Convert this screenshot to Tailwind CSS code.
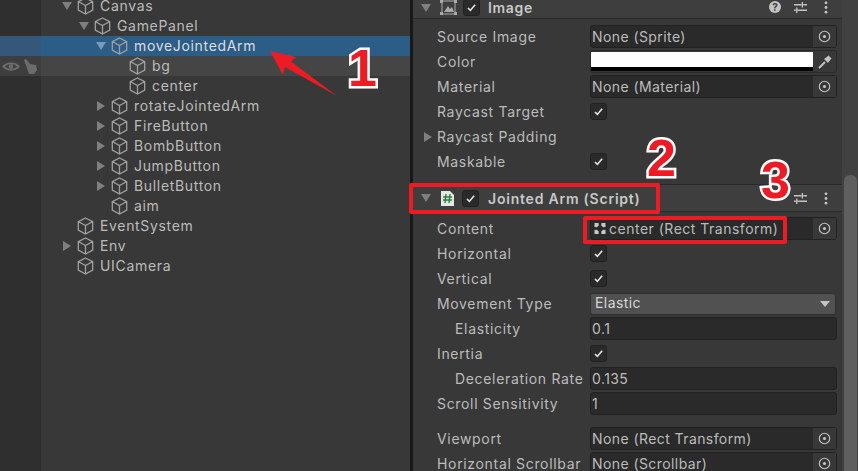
<!DOCTYPE html>
<html lang="en">
<head>
<meta charset="UTF-8">
<title>Jointed Arm</title>
<script src="https://cdn.jsdelivr.net/npm/@tailwindcss/browser@4"></script>
</head>
<body class="bg-[#383838]">
<svg class="hidden">
  <symbol id="cube" viewBox="0 0 17 18"><path d="M8.5 1 15.7 4.6V13L8.5 17 1.3 13V4.6ZM1.6 4.8 8.5 8.6 15.4 4.8M8.5 8.6V16.6" fill="none" stroke="#a0a0a0" stroke-width="1.3"/></symbol>
  <symbol id="tick" viewBox="0 0 17 17"><path d="M4.5 9 7.2 11.8 12.6 5.4" fill="none" stroke="#e6e6e6" stroke-width="1.8"/></symbol>
  <symbol id="target" viewBox="0 0 14 14"><circle cx="7" cy="7" r="5.6" fill="none" stroke="#c4c4c4" stroke-width="1.2"/><circle cx="7" cy="7" r="1.7" fill="#c4c4c4"/></symbol>
  <symbol id="sliders" viewBox="0 0 14 14"><path d="M0 4H8M10 4H14M0 10H2M4 10H14M9 1V7M3 7V13" fill="none" stroke="#c4c4c4" stroke-width="1.5"/></symbol>
  <symbol id="dots" viewBox="0 0 4 14"><circle cx="2" cy="2" r="1.5" fill="#c4c4c4"/><circle cx="2" cy="7" r="1.5" fill="#c4c4c4"/><circle cx="2" cy="12" r="1.5" fill="#c4c4c4"/></symbol>
</svg>

<div class="relative flex h-[471px] w-[858px] overflow-hidden font-['Inter','Liberation_Sans',sans-serif] text-[14px] tracking-[0.67px] text-[#bcbcbc]">

  <!-- hierarchy -->
  <div class="flex w-[410px] shrink-0 flex-col">
    <div class="mt-[-4px] flex flex-col">
      <div class="flex h-[20px] items-center"><div class="h-full w-[41px] bg-[#2f2f2f]"></div><div class="flex w-[26px] justify-end"><span class="h-0 w-0 translate-x-[5px] border-x-[5px] border-t-[8px] border-x-transparent border-t-[#7f7f7f]"></span></div><svg class="ml-[10px] h-[18px] w-[17px]"><use href="#cube"/></svg><span class="mb-[2px] ml-[6px]">Canvas</span></div>
      <div class="flex h-[20px] items-center"><div class="h-full w-[41px] bg-[#2f2f2f]"></div><div class="flex w-[43px] justify-end"><span class="h-0 w-0 translate-x-[5px] border-x-[5px] border-t-[8px] border-x-transparent border-t-[#7f7f7f]"></span></div><svg class="ml-[10px] h-[18px] w-[17px]"><use href="#cube"/></svg><span class="mb-[2px] ml-[6px]">GamePanel</span></div>
      <div class="flex h-[20px] items-center bg-[#2c5d87] text-[#dedede]"><div class="h-full w-[41px] bg-[#35587a]"></div><div class="flex w-[60px] justify-end"><span class="h-0 w-0 translate-x-[5px] border-x-[5px] border-t-[8px] border-x-transparent border-t-[#7b9ab5]"></span></div><svg class="ml-[10px] h-[18px] w-[17px]"><use href="#cube"/></svg><span class="mb-[2px] ml-[6px]">moveJointedArm</span></div>
      <div class="flex h-[20px] items-center bg-[#454545]"><div class="flex h-full w-[41px] items-center gap-[3px] bg-[#3e3e3e] pl-[2px]">
        <svg class="h-[11px] w-[18px]" viewBox="0 0 18 11"><path d="M0 5.500C4 0 14 0 18 5.500 14 11 4 11 0 5.500Z" fill="#6c6c6c"/><path d="M3 5.500C6 2.500 12 2.500 15 5.500 12 8.500 6 8.500 3 5.500Z" fill="#3e3e3e"/><circle cx="9" cy="5.500" r="2.200" fill="#6c6c6c"/></svg>
        <svg class="h-[15px] w-[15px]" viewBox="0 0 15 15"><path d="M1 1 3 0 7 5 13 6 14 11 11 15 6 15 4 9Z" fill="#6c6c6c"/></svg>
      </div><svg class="ml-[88px] h-[18px] w-[17px]"><use href="#cube"/></svg><span class="mb-[2px] ml-[6px]">bg</span></div>
      <div class="flex h-[20px] items-center"><div class="h-full w-[41px] bg-[#2f2f2f]"></div><svg class="ml-[88px] h-[18px] w-[17px]"><use href="#cube"/></svg><span class="mb-[2px] ml-[6px]">center</span></div>
      <div class="flex h-[20px] items-center"><div class="h-full w-[41px] bg-[#2f2f2f]"></div><div class="flex w-[60px] justify-end"><span class="h-0 w-0 translate-x-[4px] border-y-[5px] border-l-[8px] border-y-transparent border-l-[#7f7f7f]"></span></div><svg class="ml-[10px] h-[18px] w-[17px]"><use href="#cube"/></svg><span class="mb-[2px] ml-[6px]">rotateJointedArm</span></div>
      <div class="flex h-[20px] items-center"><div class="h-full w-[41px] bg-[#2f2f2f]"></div><div class="flex w-[60px] justify-end"><span class="h-0 w-0 translate-x-[4px] border-y-[5px] border-l-[8px] border-y-transparent border-l-[#7f7f7f]"></span></div><svg class="ml-[10px] h-[18px] w-[17px]"><use href="#cube"/></svg><span class="mb-[2px] ml-[6px]">FireButton</span></div>
      <div class="flex h-[20px] items-center"><div class="h-full w-[41px] bg-[#2f2f2f]"></div><div class="flex w-[60px] justify-end"><span class="h-0 w-0 translate-x-[4px] border-y-[5px] border-l-[8px] border-y-transparent border-l-[#7f7f7f]"></span></div><svg class="ml-[10px] h-[18px] w-[17px]"><use href="#cube"/></svg><span class="mb-[2px] ml-[6px]">BombButton</span></div>
      <div class="flex h-[20px] items-center"><div class="h-full w-[41px] bg-[#2f2f2f]"></div><div class="flex w-[60px] justify-end"><span class="h-0 w-0 translate-x-[4px] border-y-[5px] border-l-[8px] border-y-transparent border-l-[#7f7f7f]"></span></div><svg class="ml-[10px] h-[18px] w-[17px]"><use href="#cube"/></svg><span class="mb-[2px] ml-[6px]">JumpButton</span></div>
      <div class="flex h-[20px] items-center"><div class="h-full w-[41px] bg-[#2f2f2f]"></div><div class="flex w-[60px] justify-end"><span class="h-0 w-0 translate-x-[4px] border-y-[5px] border-l-[8px] border-y-transparent border-l-[#7f7f7f]"></span></div><svg class="ml-[10px] h-[18px] w-[17px]"><use href="#cube"/></svg><span class="mb-[2px] ml-[6px]">BulletButton</span></div>
      <div class="flex h-[20px] items-center"><div class="h-full w-[41px] bg-[#2f2f2f]"></div><svg class="ml-[70px] h-[18px] w-[17px]"><use href="#cube"/></svg><span class="mb-[2px] ml-[6px]">aim</span></div>
      <div class="flex h-[20px] items-center"><div class="h-full w-[41px] bg-[#2f2f2f]"></div><svg class="ml-[36px] h-[18px] w-[17px]"><use href="#cube"/></svg><span class="mb-[2px] ml-[6px]">EventSystem</span></div>
      <div class="flex h-[20px] items-center"><div class="h-full w-[41px] bg-[#2f2f2f]"></div><div class="flex w-[26px] justify-end"><span class="h-0 w-0 translate-x-[4px] border-y-[5px] border-l-[8px] border-y-transparent border-l-[#7f7f7f]"></span></div><svg class="ml-[10px] h-[18px] w-[17px]"><use href="#cube"/></svg><span class="mb-[2px] ml-[6px]">Env</span></div>
      <div class="flex h-[20px] items-center"><div class="h-full w-[41px] bg-[#2f2f2f]"></div><svg class="ml-[36px] h-[18px] w-[17px]"><use href="#cube"/></svg><span class="mb-[2px] ml-[6px]">UICamera</span></div>
    </div>
    <div class="w-[41px] flex-1 bg-[#2f2f2f]"></div>
  </div>

  <div class="w-[3px] shrink-0 bg-[#191919]"></div>

  <!-- inspector -->
  <div class="flex w-[429px] shrink-0 flex-col overflow-hidden">
    <div class="flex h-[19px] shrink-0 items-center border-b border-[#2a2a2a] bg-[#3e3e3e] pl-[8px]">
      <span class="mt-[-3px] h-0 w-0 border-x-[5px] border-t-[8px] border-x-transparent border-t-[#7f7f7f]"></span>
      <svg class="ml-[9px] mt-[-3px] h-[15px] w-[17px]" viewBox="0 0 17 15"><path d="M2 1H15V14H2Z" fill="none" stroke="#aaa"/><path d="M4 12 8 6 10 9 12 7 14 12Z" fill="#aaa"/><path d="M0 0H3V3H0ZM14 0H17V3H14ZM0 12H3V15H0ZM14 12H17V15H14Z" fill="#aaa"/></svg>
      <div class="ml-[6px] mt-[-3px] flex h-[17px] w-[17px] items-center justify-center rounded-[3px] border border-[#212121] bg-[#2a2a2a]"><svg class="h-[15px] w-[15px]"><use href="#tick"/></svg></div>
      <span class="ml-[8px] mt-[-3px] font-semibold text-[#c8c8c8]">Image</span>
      <div class="ml-auto mr-[14px] mt-[-4px] flex items-center gap-[13px]">
        <span class="flex h-[12px] w-[12px] items-center justify-center rounded-full bg-[#c4c4c4] text-[10px] font-bold tracking-normal text-[#3e3e3e]">?</span>
        <svg class="h-[13px] w-[13px]"><use href="#sliders"/></svg>
        <svg class="ml-[4px] h-[13px] w-[4px]"><use href="#dots"/></svg>
      </div>
    </div>

    <div class="mt-[5px] flex flex-col">
      <div class="flex h-[25px] items-center pl-[24px]"><span class="w-[153px]">Source Image</span><div class="flex h-[23px] w-[247px] items-center justify-between rounded-[3px] border border-[#212121] bg-[#2a2a2a] pl-[1px] tracking-[0.42px]"><span>None (Sprite)</span><span class="flex h-full w-[23px] items-center justify-center bg-[#383838]"><svg class="h-[13px] w-[13px]"><use href="#target"/></svg></span></div></div>
      <div class="flex h-[25px] items-center pl-[24px]"><span class="w-[153px]">Color</span><div class="flex h-[23px] w-[247px] items-center justify-between rounded-[3px] border border-[#2a2a2a] bg-[#383838]"><div class="h-[19px] w-[222px] border-b-[4px] border-black bg-white"></div><span class="flex w-[23px] justify-center"><svg class="h-[14px] w-[14px]" viewBox="0 0 14 14"><path d="M1 13 7 7" fill="none" stroke="#c4c4c4" stroke-width="2"/><path d="M6 4 7.500 3 10.500 0.500 13.500 3.500 11 6.500 10 8Z" fill="#c4c4c4"/></svg></span></div></div>
      <div class="flex h-[25px] items-center pl-[24px]"><span class="w-[153px]">Material</span><div class="flex h-[23px] w-[247px] items-center justify-between rounded-[3px] border border-[#212121] bg-[#2a2a2a] pl-[1px] tracking-[0.42px]"><span>None (Material)</span><span class="flex h-full w-[23px] items-center justify-center bg-[#383838]"><svg class="h-[13px] w-[13px]"><use href="#target"/></svg></span></div></div>
      <div class="flex h-[25px] items-center pl-[24px]"><span class="w-[153px]">Raycast Target</span><div class="flex h-[17px] w-[17px] items-center justify-center rounded-[3px] border border-[#212121] bg-[#2a2a2a]"><svg class="h-[15px] w-[15px]"><use href="#tick"/></svg></div></div>
      <div class="flex h-[25px] items-center pl-[11px]"><span class="h-0 w-0 border-y-[5px] border-l-[8px] border-y-transparent border-l-[#7f7f7f]"></span><span class="ml-[5px]">Raycast Padding</span></div>
      <div class="flex h-[25px] items-center pl-[24px]"><span class="w-[153px]">Maskable</span><div class="flex h-[17px] w-[17px] items-center justify-center rounded-[3px] border border-[#212121] bg-[#2a2a2a]"><svg class="h-[15px] w-[15px]"><use href="#tick"/></svg></div></div>
    </div>

    <div class="mt-[10px] flex h-[28px] shrink-0 items-center border-y border-[#2a2a2a] bg-[#3e3e3e] pl-[8px]">
      <span class="h-0 w-0 border-x-[5px] border-t-[8px] border-x-transparent border-t-[#7f7f7f]"></span>
      <svg class="ml-[9px] h-[17px] w-[15px]" viewBox="0 0 15 17"><path d="M1 1H10L14 5V16H1Z" fill="#e6e6e6"/><path d="M6 4 5 13M10 4 9 13M3 7H12M3 10H12" stroke="#2f7d3c" stroke-width="1.4" fill="none"/></svg>
      <div class="ml-[7px] flex h-[17px] w-[17px] items-center justify-center rounded-[3px] border border-[#212121] bg-[#2a2a2a]"><svg class="h-[15px] w-[15px]"><use href="#tick"/></svg></div>
      <span class="ml-[9px] font-semibold tracking-[0.78px] text-[#c8c8c8]">Jointed Arm (Script)</span>
      <div class="ml-auto mr-[14px] flex items-center gap-[17px]">
        <svg class="h-[13px] w-[13px]"><use href="#sliders"/></svg>
        <svg class="h-[13px] w-[4px]"><use href="#dots"/></svg>
      </div>
    </div>

    <div class="mt-[4px] flex flex-col">
      <div class="flex h-[25px] items-center pl-[24px]"><span class="w-[153px]">Content</span><div class="flex h-[23px] w-[247px] items-center justify-between rounded-[3px] border border-[#212121] bg-[#2a2a2a] pl-[3px] tracking-[0.5px]"><span class="flex items-center gap-[3px] whitespace-nowrap"><svg class="h-[11px] w-[12px]" viewBox="0 0 12 11"><path d="M0.500 0H4.500L4.800 2.500 2.800 4.300 0.500 4ZM11.500 0V4L9.200 4.300 7.200 2.500 7.500 0ZM0.500 11V7L2.800 6.700 4.800 8.500 4.500 11ZM11.500 11H7.500L7.200 8.500 9.200 6.700 11.500 7Z" fill="#c8c8c8"/></svg>center (Rect Transform)</span><span class="flex h-full w-[23px] items-center justify-center bg-[#383838]"><svg class="h-[13px] w-[13px]"><use href="#target"/></svg></span></div></div>
      <div class="flex h-[25px] items-center pl-[24px]"><span class="w-[153px]">Horizontal</span><div class="flex h-[17px] w-[17px] items-center justify-center rounded-[3px] border border-[#212121] bg-[#2a2a2a]"><svg class="h-[15px] w-[15px]"><use href="#tick"/></svg></div></div>
      <div class="flex h-[25px] items-center pl-[24px]"><span class="w-[153px]">Vertical</span><div class="flex h-[17px] w-[17px] items-center justify-center rounded-[3px] border border-[#212121] bg-[#2a2a2a]"><svg class="h-[15px] w-[15px]"><use href="#tick"/></svg></div></div>
      <div class="flex h-[25px] items-center pl-[24px]"><span class="w-[153px]">Movement Type</span><div class="flex h-[22px] w-[246px] items-center justify-between rounded-[3px] border border-[#303030] bg-[#515151] px-[4px] text-[#d6d6d6]"><span class="mb-[2px] tracking-[0.42px]">Elastic</span><span class="mr-[1px] h-0 w-0 border-x-[5px] border-t-[6px] border-x-transparent border-t-[#c4c4c4]"></span></div></div>
      <div class="flex h-[25px] items-center pl-[42px]"><span class="w-[135px]">Elasticity</span><div class="flex h-[23px] w-[247px] items-center rounded-[3px] border border-[#212121] bg-[#2a2a2a] pl-[1px] tracking-[0.42px]">0.1</div></div>
      <div class="flex h-[25px] items-center pl-[24px]"><span class="w-[153px]">Inertia</span><div class="flex h-[17px] w-[17px] items-center justify-center rounded-[3px] border border-[#212121] bg-[#2a2a2a]"><svg class="h-[15px] w-[15px]"><use href="#tick"/></svg></div></div>
      <div class="flex h-[25px] items-center pl-[42px]"><span class="w-[135px] whitespace-nowrap">Deceleration Rate</span><div class="flex h-[23px] w-[247px] items-center rounded-[3px] border border-[#212121] bg-[#2a2a2a] pl-[1px] tracking-[0.42px]">0.135</div></div>
      <div class="flex h-[25px] items-center pl-[24px]"><span class="w-[153px]">Scroll Sensitivity</span><div class="flex h-[23px] w-[247px] items-center rounded-[3px] border border-[#212121] bg-[#2a2a2a] pl-[1px] tracking-[0.42px]">1</div></div>
      <div class="mt-[10px] flex h-[25px] items-center pl-[24px]"><span class="w-[153px]">Viewport</span><div class="flex h-[23px] w-[247px] items-center justify-between rounded-[3px] border border-[#212121] bg-[#2a2a2a] pl-[1px] tracking-[0.42px]"><span>None (Rect Transform)</span><span class="flex h-full w-[23px] items-center justify-center bg-[#383838]"><svg class="h-[13px] w-[13px]"><use href="#target"/></svg></span></div></div>
      <div class="flex h-[25px] items-center pl-[24px]"><span class="w-[153px] whitespace-nowrap">Horizontal Scrollbar</span><div class="flex h-[23px] w-[247px] items-center justify-between rounded-[3px] border border-[#212121] bg-[#2a2a2a] pl-[1px] tracking-[0.42px]"><span>None (Scrollbar)</span><span class="flex h-full w-[23px] items-center justify-center bg-[#383838]"><svg class="h-[13px] w-[13px]"><use href="#target"/></svg></span></div></div>
    </div>
  </div>

  <!-- scrollbar -->
  <div class="flex w-[16px] shrink-0 flex-col bg-[#414141] pl-[2px] pr-[1px] pt-[175px]">
    <div class="flex-1 rounded-t-[6px] bg-[#5f5f5f]"></div>
  </div>

  <!-- annotations on top of the screenshot -->
  <svg class="absolute left-0 top-0 h-[471px] w-[858px]" viewBox="0 0 858 471"><path d="M270 51 296 57 291 61.500 337 96 285 67 283 75Z" fill="#ed1c24"/></svg>
  <div class="absolute left-[409px] top-[183px] h-[31px] w-[251px] rounded-[2px] border-[4px] border-[#ed1c24]"></div>
  <div class="absolute left-[583px] top-[216px] h-[28px] w-[204px] rounded-[2px] border-[4px] border-[#ed1c24]"></div>
  <span class="absolute left-[348px] top-[38px] font-['Liberation_Sans',sans-serif] text-[52px] font-bold leading-[60px] tracking-normal text-[#ed1c24] [paint-order:stroke_fill] [-webkit-text-stroke:5px_white]">1</span>
  <span class="absolute left-[647px] top-[128px] font-['Liberation_Sans',sans-serif] text-[52px] font-bold leading-[60px] tracking-normal text-[#ed1c24] [paint-order:stroke_fill] [-webkit-text-stroke:5px_white]">2</span>
  <span class="absolute left-[761px] top-[150px] font-['Liberation_Sans',sans-serif] text-[52px] font-bold leading-[60px] tracking-normal text-[#ed1c24] [paint-order:stroke_fill] [-webkit-text-stroke:5px_white]">3</span>
</div>
</body>
</html>
